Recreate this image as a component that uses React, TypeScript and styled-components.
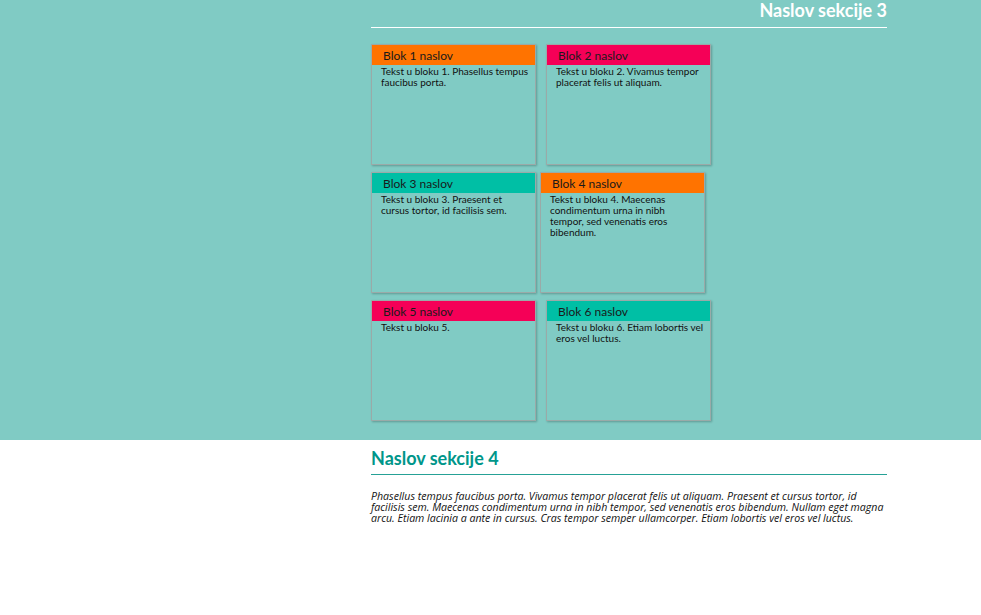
import React from "react";
import styled, { createGlobalStyle } from "styled-components";

const GlobalStyle = createGlobalStyle`
  html, body {
    margin: 0;
    padding: 0;
    background: white;
  }
  body {
    font-family: Lato, "DejaVu Sans", sans-serif;
  }
`;

type Block = {
  title: string;
  text: string;
  color: string;
};

const rows: { blocks: Block[]; gap: number }[] = [
  {
    gap: 10,
    blocks: [
      { title: "Blok 1 naslov", text: "Tekst u bloku 1. Phasellus tempus faucibus porta.", color: "#ff7300" },
      { title: "Blok 2 naslov", text: "Tekst u bloku 2. Vivamus tempor placerat felis ut aliquam.", color: "#f50057" },
    ],
  },
  {
    gap: 4,
    blocks: [
      { title: "Blok 3 naslov", text: "Tekst u bloku 3. Praesent et cursus tortor, id facilisis sem.", color: "#00bfa5" },
      { title: "Blok 4 naslov", text: "Tekst u bloku 4. Maecenas condimentum urna in nibh tempor, sed venenatis eros bibendum.", color: "#ff7300" },
    ],
  },
  {
    gap: 10,
    blocks: [
      { title: "Blok 5 naslov", text: "Tekst u bloku 5.", color: "#f50057" },
      { title: "Blok 6 naslov", text: "Tekst u bloku 6. Etiam lobortis vel eros vel luctus.", color: "#00bfa5" },
    ],
  },
];

export default function App() {
  return (
    <>
      <GlobalStyle />
      <TealSection>
        <Content>
          <LightHeading>Naslov sekcije 3</LightHeading>
          <Blocks>
            {rows.map((row, i) => (
              <BlockRow key={i} $gap={row.gap}>
                {row.blocks.map((b) => (
                  <Card key={b.title}>
                    <CardTitle $color={b.color}>{b.title}</CardTitle>
                    <CardText>{b.text}</CardText>
                  </Card>
                ))}
              </BlockRow>
            ))}
          </Blocks>
        </Content>
      </TealSection>
      <WhiteSection>
        <Content>
          <DarkHeading>Naslov sekcije 4</DarkHeading>
          <Paragraph>
            Phasellus tempus faucibus porta. Vivamus tempor placerat felis ut
            aliquam. Praesent et cursus tortor, id facilisis sem. Maecenas
            condimentum urna in nibh tempor, sed venenatis eros bibendum. Nullam
            eget magna arcu. Etiam lacinia a ante in cursus. Cras tempor semper
            ullamcorper. Etiam lobortis vel eros vel luctus.
          </Paragraph>
        </Content>
      </WhiteSection>
    </>
  );
}

const TealSection = styled.section`
  background-color: #80cbc4;
  height: 440px;
  box-sizing: border-box;
`;

const WhiteSection = styled.section`
  background-color: white;
  padding-top: 8px;
`;

const Content = styled.div`
  margin-left: 371px;
  width: 516px;
`;

const LightHeading = styled.h2`
  margin: 0;
  padding-bottom: 6px;
  color: white;
  font-size: 18px;
  line-height: 21px;
  font-weight: 700;
  text-align: right;
  border-bottom: 1px solid white;
`;

const Blocks = styled.div`
  display: flex;
  flex-direction: column;
  gap: 7px;
  padding-top: 16px;
`;

const BlockRow = styled.div<{ $gap: number }>`
  display: flex;
  gap: ${(p) => p.$gap}px;
`;

const Card = styled.div`
  width: 165px;
  height: 121px;
  box-sizing: border-box;
  border: 1px solid #9aaaa8;
  box-shadow: 1px 1px 2px rgba(0, 0, 0, 0.25);
`;

const CardTitle = styled.div<{ $color: string }>`
  background-color: ${(p) => p.$color};
  height: 20px;
  line-height: 21px;
  padding-left: 11px;
  font-size: 12px;
  color: #1a1a1a;
`;

const CardText = styled.p`
  margin: 0;
  padding: 1px 4px 0 9px;
  font-size: 10px;
  line-height: 11px;
  color: #111;
`;

const DarkHeading = styled.h2`
  margin: 0;
  padding-bottom: 5px;
  color: #00968a;
  font-size: 18px;
  line-height: 21px;
  font-weight: 700;
  border-bottom: 1px solid #26a196;
`;

const Paragraph = styled.p`
  margin: 16px 0 0 0;
  font-family: "Open Sans", Lato, sans-serif;
  font-size: 10.6px;
  line-height: 11px;
  font-style: italic;
  color: #111;
`;
